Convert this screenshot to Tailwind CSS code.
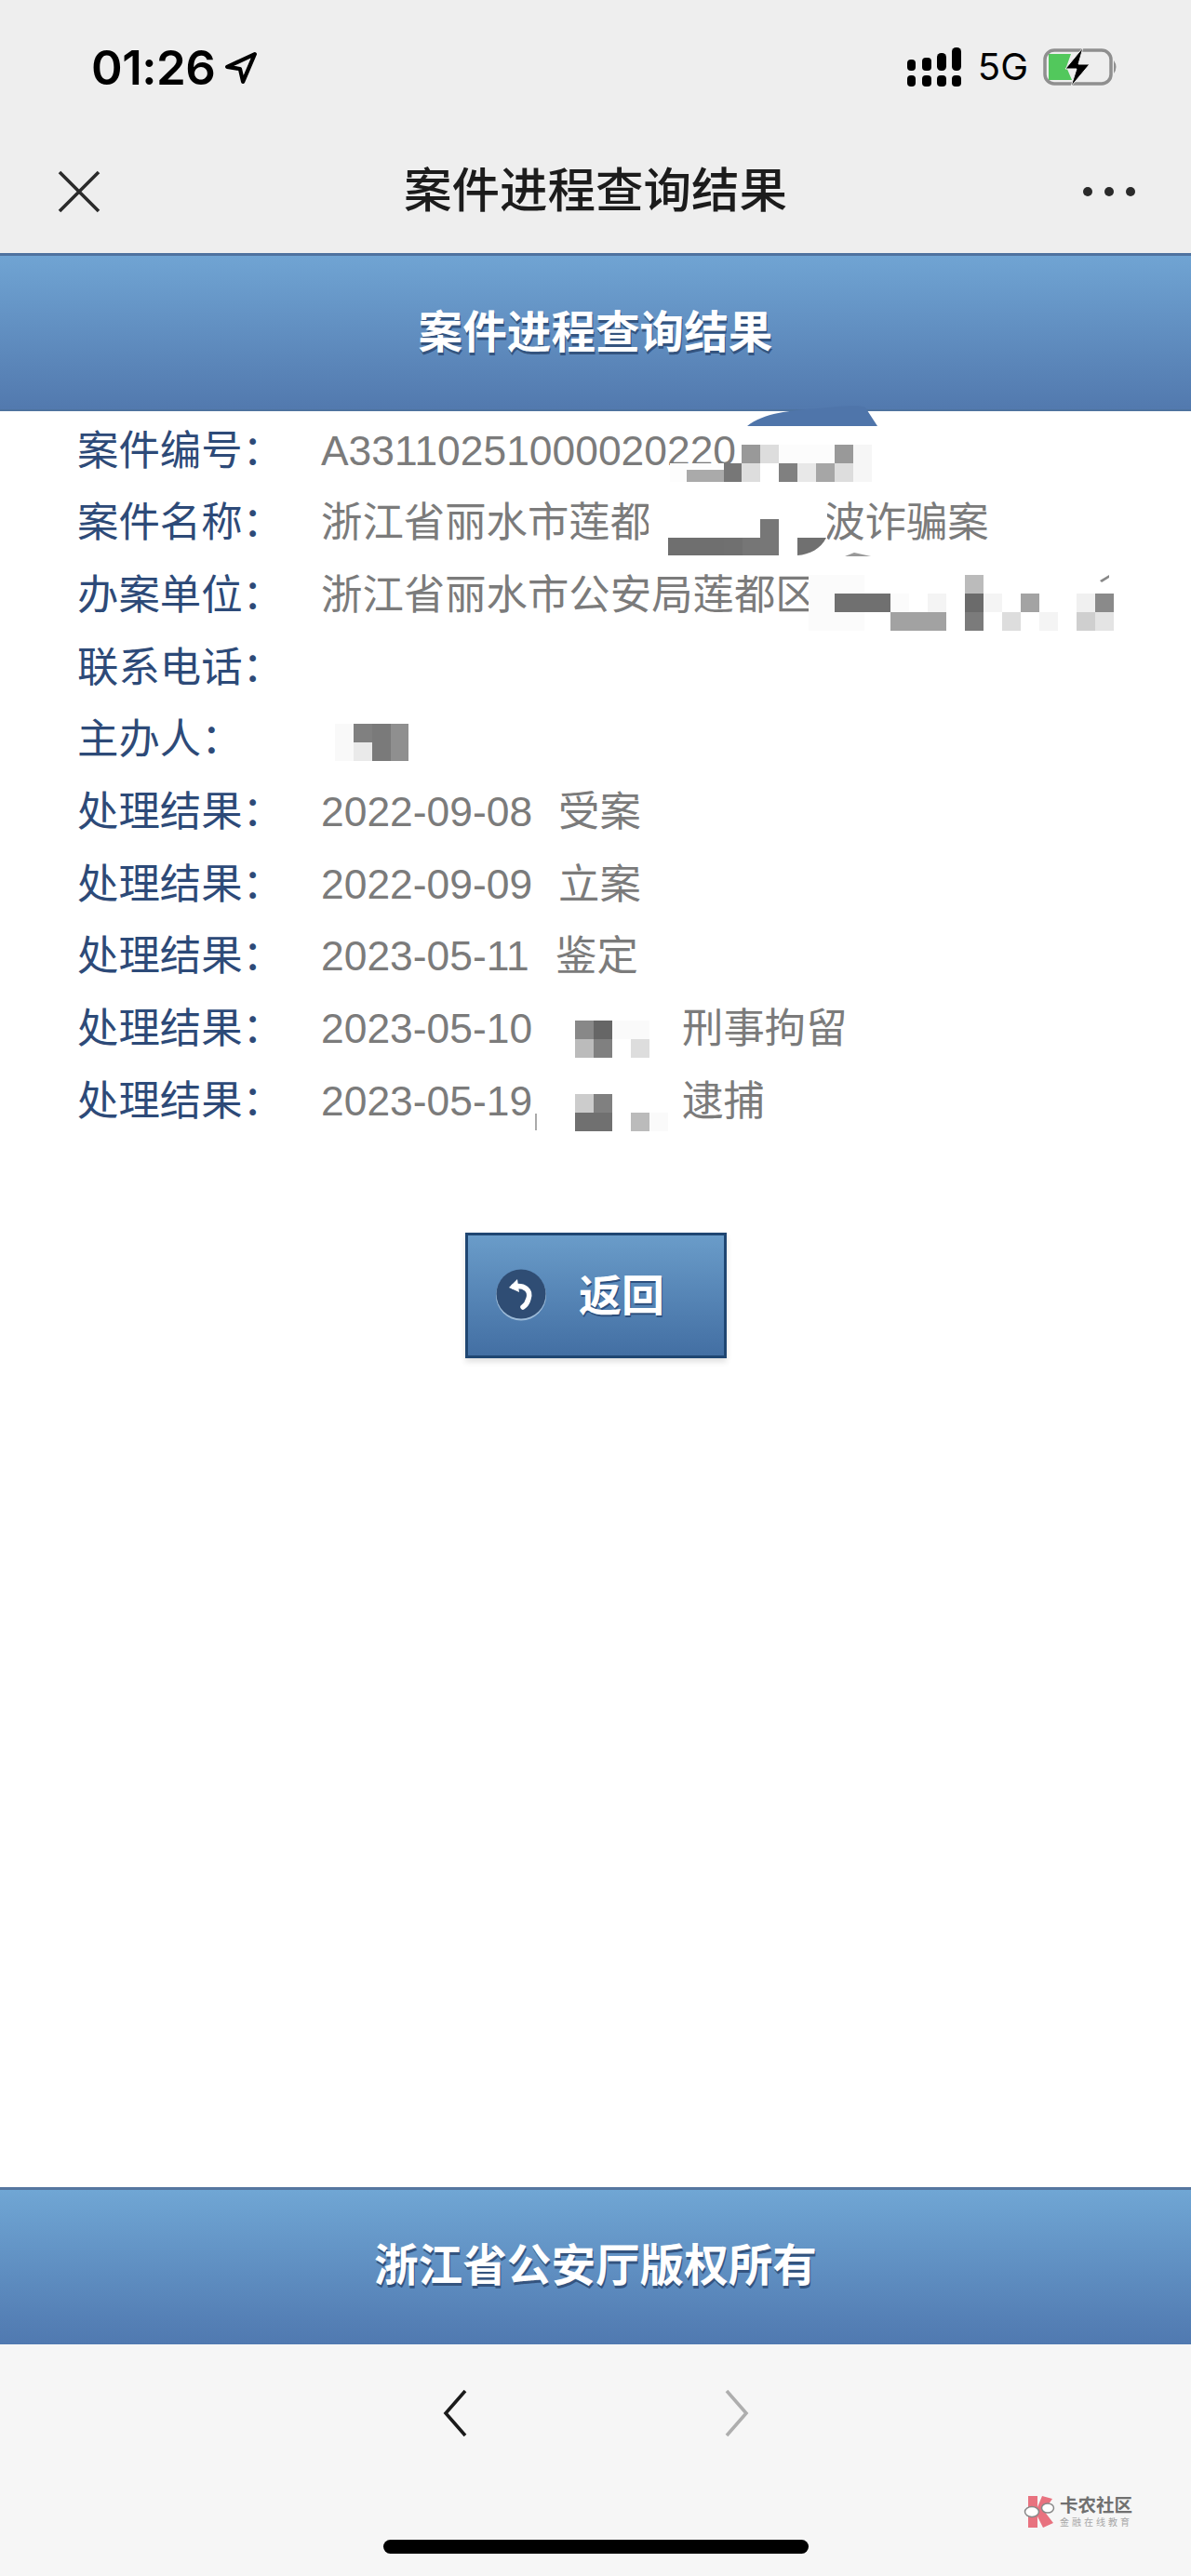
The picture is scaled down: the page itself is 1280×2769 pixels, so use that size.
<!DOCTYPE html>
<html lang="zh-CN">
<head>
<meta charset="utf-8">
<title>案件进程查询结果</title>
<script src="https://cdn.jsdelivr.net/npm/@tailwindcss/browser@4"></script>
</head>
<body class="m-0">
<div class="relative flex flex-col w-[1280px] h-[2769px] overflow-hidden bg-white font-['Liberation_Sans','Noto_Sans_CJK_SC',sans-serif]">

  <!-- iOS status bar -->
  <div class="flex items-center justify-between h-[144px] pl-[98px] pr-[77px] bg-[#eeeeee] shrink-0">
    <div class="flex items-center gap-[10px]">
      <span class="text-[51px] leading-none font-semibold tracking-[-0.5px] text-black font-['Inter','Liberation_Sans',sans-serif]">01:26</span>
      <svg width="36" height="36" viewBox="0 0 34 34" class="mt-[2px]"><path d="M31 3 L3 16 L16 18 L19 31 Z" fill="none" stroke="#000" stroke-width="4" stroke-linejoin="round"/></svg>
    </div>
    <div class="flex items-center">
      <svg width="58" height="42" viewBox="0 0 58 42" fill="#000">
        <rect x="0" y="13" width="9" height="12" rx="4"/><rect x="16" y="11" width="10" height="14" rx="4"/><rect x="32" y="6" width="10" height="19" rx="4.5"/><rect x="48" y="0" width="10" height="25" rx="4.5"/>
        <rect x="0" y="30" width="9" height="12" rx="4"/><rect x="16" y="30" width="10" height="12" rx="4"/><rect x="32" y="30" width="10" height="12" rx="4"/><rect x="48" y="30" width="10" height="12" rx="4"/>
      </svg>
      <span class="ml-[18px] text-[40px] leading-none text-black font-['Inter','Liberation_Sans',sans-serif]">5G</span>
      <svg width="82" height="44" viewBox="0 0 82 44" class="ml-[16px]">
        <rect x="2" y="4" width="71" height="36" rx="10" fill="none" stroke="#8f8f8f" stroke-width="3.5"/>
        <path d="M76 15 Q81 22 76 29 Z" fill="#8f8f8f"/>
        <path d="M6 8 H30 L25 22 L31 36 H6 Z" fill="#52c85c" />
        <path d="M43 1 L24 24 H36 L30 43 L50 19 H38 Z" fill="#000" stroke="#eeeeee" stroke-width="1"/>
      </svg>
    </div>
  </div>

  <!-- WeChat nav bar -->
  <div class="grid grid-cols-[1fr_auto_1fr] items-center h-[128px] pb-[4px] px-[60px] bg-[#eeeeee] shrink-0">
    <svg width="48" height="48" viewBox="0 0 48 48" fill="none" stroke="#2a2a2a" stroke-width="3.6"><path d="M4 3 L46 45 M46 3 L4 45"/></svg>
    <span class="text-[51.5px] leading-none font-medium text-[#1c1c1c]">案件进程查询结果</span>
    <div class="flex justify-end gap-[13px]">
      <span class="w-[10px] h-[10px] rounded-full bg-[#2a2a2a]"></span>
      <span class="w-[10px] h-[10px] rounded-full bg-[#2a2a2a]"></span>
      <span class="w-[10px] h-[10px] rounded-full bg-[#2a2a2a]"></span>
    </div>
  </div>

  <!-- Page header -->
  <div class="flex items-center justify-center h-[170px] border-t-[3px] border-b-[2px] border-t-[#4f729f] border-b-[#4e739f] bg-gradient-to-b from-[#70a4d3] to-[#5279ae] shrink-0">
    <span class="text-[47.6px] leading-none font-bold text-white [text-shadow:1px_3px_0_#34547f]">案件进程查询结果</span>
  </div>

  <!-- Result rows -->
  <div class="flex-1 flex flex-col pl-[83px] pt-[4px] text-[44.4px] leading-none text-[#7b7b7b]">
    <div class="flex items-center h-[77.7px]"><span class="w-[262px] shrink-0 text-[#2d4a78]">案件编号：</span><span>A33110251000020220</span></div>
    <div class="flex items-center h-[77.7px]"><span class="w-[262px] shrink-0 text-[#2d4a78]">案件名称：</span><span>浙江省丽水市莲都</span><span class="ml-[185px]">波诈骗案</span></div>
    <div class="flex items-center h-[77.7px]"><span class="w-[262px] shrink-0 text-[#2d4a78]">办案单位：</span><span>浙江省丽水市公安局莲都区</span></div>
    <div class="flex items-center h-[77.7px]"><span class="w-[262px] shrink-0 text-[#2d4a78]">联系电话：</span></div>
    <div class="flex items-center h-[77.7px]"><span class="w-[262px] shrink-0 text-[#2d4a78]">主办人：</span></div>
    <div class="flex items-center h-[77.7px]"><span class="w-[262px] shrink-0 text-[#2d4a78]">处理结果：</span><span class="w-[255px]">2022-09-08</span><span>受案</span></div>
    <div class="flex items-center h-[77.7px]"><span class="w-[262px] shrink-0 text-[#2d4a78]">处理结果：</span><span class="w-[255px]">2022-09-09</span><span>立案</span></div>
    <div class="flex items-center h-[77.7px]"><span class="w-[262px] shrink-0 text-[#2d4a78]">处理结果：</span><span class="w-[252px]">2023-05-11</span><span>鉴定</span></div>
    <div class="flex items-center h-[77.7px]"><span class="w-[262px] shrink-0 text-[#2d4a78]">处理结果：</span><span class="w-[388px]">2023-05-10</span><span>刑事拘留</span></div>
    <div class="flex items-center h-[77.7px]"><span class="w-[262px] shrink-0 text-[#2d4a78]">处理结果：</span><span class="w-[388px]">2023-05-19</span><span>逮捕</span></div>

    <!-- Back button -->
    <div class="flex justify-start pl-[417px] pt-[102px]">
      <div class="flex items-center w-[281px] h-[135px] pl-[29px] border-[3px] border-[#1f4672] bg-gradient-to-b from-[#6a9cc9] to-[#436fa3] shadow-[0_4px_6px_rgba(0,0,0,0.12)]">
        <svg width="56" height="56" viewBox="0 0 56 56" class="shrink-0">
          <circle cx="28" cy="28.5" r="27" fill="#9dbbd8"/>
          <circle cx="28" cy="27" r="26.5" fill="#2f4d74"/>
          <path d="M24 11 L15 20 L26 25 Z" fill="#fff"/>
          <path d="M20 19 C32 17 39 23 36 32 C35 36 33 39 30 41" fill="none" stroke="#fff" stroke-width="5.5" stroke-linecap="round"/>
        </svg>
        <span class="ml-[34px] mt-[2px] text-[46px] leading-none font-bold text-white [text-shadow:1px_2px_0_#2c4f7d]">返回</span>
      </div>
    </div>
  </div>

  <!-- Footer -->
  <div class="flex items-center justify-center h-[169px] pb-[2px] border-t-[3px] border-t-[#55769f] bg-gradient-to-b from-[#70a6d4] to-[#5079b0] shrink-0">
    <span class="text-[47.6px] leading-none font-bold text-white [text-shadow:1px_3px_0_#34547f]">浙江省公安厅版权所有</span>
  </div>

  <!-- Browser toolbar -->
  <div class="relative flex flex-col items-center h-[249px] bg-[#f6f6f6] shrink-0">
    <div class="flex items-center gap-[277px] pt-[49px]">
      <svg width="26" height="50" viewBox="0 0 26 50" fill="none" stroke="#1b1b1b" stroke-width="3.6"><path d="M24 1 L3 25 L24 49"/></svg>
      <svg width="26" height="50" viewBox="0 0 26 50" fill="none" stroke="#aeaeae" stroke-width="3.6"><path d="M2 1 L23 25 L2 49"/></svg>
    </div>
    <div class="absolute right-[63px] top-[162px] flex items-center gap-[5px]">
      <svg width="34" height="36" viewBox="0 0 34 36">
        <path d="M5 1 H15 V13 L20 1 L31 4 L22 17 L32 30 L21 35 L15 23 V35 H5 Z" fill="#e8727f"/>
        <ellipse cx="9" cy="18" rx="7.5" ry="5.5" fill="#fff" stroke="#888" stroke-width="1.5"/>
        <ellipse cx="26" cy="14" rx="6.5" ry="5" fill="#fff" stroke="#888" stroke-width="1.5"/>
      </svg>
      <div class="flex flex-col text-[#707070] gap-[3px]">
        <span class="text-[19.5px] leading-[20px] font-bold">卡农社区</span>
        <span class="text-[10px] leading-[11px] tracking-[3px] text-[#a8a8a8]">金融在线教育</span>
      </div>
    </div>
    <div class="absolute left-[412px] top-[210px] w-[457px] h-[15px] rounded-full bg-black"></div>
  </div>

  <!-- Privacy mosaics laid over the text -->
  <svg class="absolute left-0 top-0 pointer-events-none" width="1280" height="2769" viewBox="0 0 1280 2769">
    <path d="M803 458 C820 444 850 441 880 439 C905 436 925 435 930 438 L943 458 Z" fill="#4f75aa"/>

    <rect x="720" y="498" width="77" height="20" fill="#fdfdfd"/>
    <rect x="797" y="478" width="20" height="20" fill="#999"/>
    <rect x="817" y="478" width="20" height="20" fill="#ddd"/>
    <rect x="837" y="478" width="60" height="20" fill="#fcfcfc"/>
    <rect x="897" y="478" width="20" height="20" fill="#999"/>
    <rect x="917" y="478" width="20" height="20" fill="#f6f6f6"/>
    <rect x="738" y="505" width="40" height="13" fill="#aaa"/>
    <rect x="778" y="498" width="19" height="20" fill="#777"/>
    <rect x="797" y="498" width="20" height="20" fill="#ddd"/>
    <rect x="817" y="498" width="20" height="20" fill="#fff"/>
    <rect x="837" y="498" width="20" height="20" fill="#808080"/>
    <rect x="857" y="498" width="20" height="20" fill="#e8e8e8"/>
    <rect x="877" y="498" width="20" height="20" fill="#a6a6a6"/>
    <rect x="897" y="498" width="20" height="20" fill="#ddd"/>
    <rect x="917" y="498" width="20" height="20" fill="#f6f6f6"/>

    <rect x="697" y="538" width="192" height="62" fill="#fff"/>
    <rect x="718" y="578" width="60" height="19" fill="#6f6f6f"/>
    <rect x="778" y="578" width="20" height="19" fill="#707070"/>
    <rect x="798" y="578" width="19" height="19" fill="#767676"/>
    <rect x="817" y="558" width="20" height="39" fill="#777"/>
    <path d="M857 578 H888 C882 590 870 596 857 597 Z" fill="#707070"/>
    <path d="M908 598 L918 594 L936 598 Z" fill="#999"/>

    <rect x="869" y="618" width="60" height="60" fill="#fbfbfb"/>
    <rect x="897" y="638" width="60" height="20" fill="#707070"/>
    <rect x="957" y="658" width="60" height="20" fill="#a2a2a2"/>
    <rect x="957" y="638" width="20" height="20" fill="#fbfbfb"/>
    <rect x="997" y="638" width="20" height="20" fill="#f4f4f4"/>
    <rect x="1037" y="618" width="20" height="20" fill="#bbb"/>
    <rect x="1037" y="638" width="20" height="20" fill="#6b6b6b"/>
    <rect x="1037" y="658" width="20" height="20" fill="#7b7b7b"/>
    <rect x="1057" y="638" width="20" height="20" fill="#f4f4f4"/>
    <rect x="1077" y="658" width="20" height="20" fill="#ddd"/>
    <rect x="1097" y="638" width="20" height="20" fill="#a3a3a3"/>
    <rect x="1117" y="658" width="20" height="20" fill="#f4f4f4"/>
    <rect x="1157" y="638" width="20" height="20" fill="#f0f0f0"/>
    <rect x="1177" y="638" width="20" height="20" fill="#8a8a8a"/>
    <rect x="1157" y="658" width="20" height="20" fill="#cfcfcf"/>
    <rect x="1177" y="658" width="20" height="20" fill="#e4e4e4"/>
    <path d="M1182 624 L1192 618 V621 L1184 626 Z" fill="#888"/>

    <rect x="360" y="778" width="20" height="40" fill="#f9f9f9"/>
    <rect x="380" y="778" width="20" height="20" fill="#808080"/>
    <rect x="380" y="798" width="20" height="20" fill="#eaeaea"/>
    <rect x="400" y="778" width="20" height="40" fill="#7a7a7a"/>
    <rect x="420" y="778" width="19" height="40" fill="#8f8f8f"/>

    <rect x="618" y="1097" width="20" height="20" fill="#888"/>
    <rect x="638" y="1097" width="20" height="20" fill="#666"/>
    <rect x="618" y="1117" width="20" height="20" fill="#bbb"/>
    <rect x="638" y="1117" width="20" height="20" fill="#808080"/>
    <rect x="658" y="1097" width="40" height="20" fill="#fafafa"/>
    <rect x="678" y="1117" width="20" height="20" fill="#ddd"/>

    <rect x="618" y="1176" width="20" height="20" fill="#ccc"/>
    <rect x="638" y="1176" width="20" height="20" fill="#808080"/>
    <rect x="618" y="1196" width="40" height="20" fill="#707070"/>
    <rect x="678" y="1196" width="20" height="20" fill="#bbb"/>
    <rect x="698" y="1196" width="20" height="20" fill="#fafafa"/>
    <rect x="575" y="1197" width="2" height="18" fill="#aaa"/>
  </svg>
</div>
</body>
</html>
